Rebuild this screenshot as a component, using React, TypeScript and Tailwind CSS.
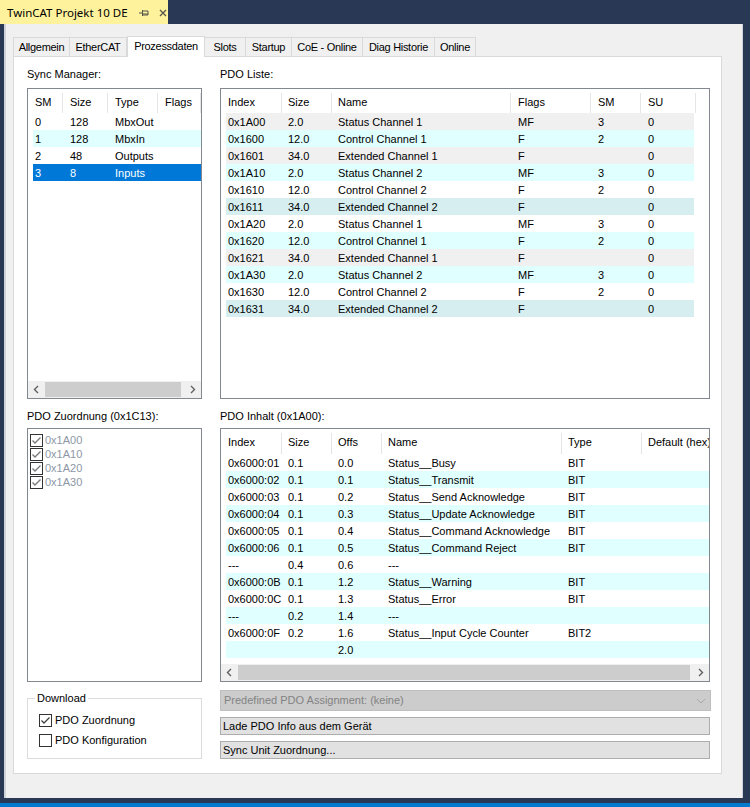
import React from "react";

type Col = { w: number; label: string; pl?: number };

const smCols: Col[] = [
  { w: 35, label: "SM" },
  { w: 45, label: "Size" },
  { w: 50, label: "Type" },
  { w: 43, label: "Flags" },
];

const smRows = [
  { cells: ["0", "128", "MbxOut", ""], bg: "white" },
  { cells: ["1", "128", "MbxIn", ""], bg: "cyan" },
  { cells: ["2", "48", "Outputs", ""], bg: "white" },
  { cells: ["3", "8", "Inputs", ""], bg: "sel" },
];

const listCols: Col[] = [
  { w: 61, label: "Index", pl: 7 },
  { w: 50, label: "Size", pl: 6 },
  { w: 179, label: "Name", pl: 6 },
  { w: 80, label: "Flags", pl: 7 },
  { w: 50, label: "SM", pl: 7 },
  { w: 55, label: "SU", pl: 7 },
];

const listRows = [
  { cells: ["0x1A00", "2.0", "Status Channel 1", "MF", "3", "0"], bg: "gray" },
  { cells: ["0x1600", "12.0", "Control Channel 1", "F", "2", "0"], bg: "cyan" },
  { cells: ["0x1601", "34.0", "Extended Channel 1", "F", "", "0"], bg: "gray" },
  { cells: ["0x1A10", "2.0", "Status Channel 2", "MF", "3", "0"], bg: "cyan" },
  { cells: ["0x1610", "12.0", "Control Channel 2", "F", "2", "0"], bg: "white" },
  { cells: ["0x1611", "34.0", "Extended Channel 2", "F", "", "0"], bg: "teal" },
  { cells: ["0x1A20", "2.0", "Status Channel 1", "MF", "3", "0"], bg: "white" },
  { cells: ["0x1620", "12.0", "Control Channel 1", "F", "2", "0"], bg: "cyan" },
  { cells: ["0x1621", "34.0", "Extended Channel 1", "F", "", "0"], bg: "gray" },
  { cells: ["0x1A30", "2.0", "Status Channel 2", "MF", "3", "0"], bg: "cyan" },
  { cells: ["0x1630", "12.0", "Control Channel 2", "F", "2", "0"], bg: "white" },
  { cells: ["0x1631", "34.0", "Extended Channel 2", "F", "", "0"], bg: "teal" },
];

const inhaltCols: Col[] = [
  { w: 61, label: "Index", pl: 7 },
  { w: 50, label: "Size", pl: 6 },
  { w: 50, label: "Offs", pl: 6 },
  { w: 180, label: "Name", pl: 6 },
  { w: 80, label: "Type", pl: 6 },
  { w: 80, label: "Default (hex)", pl: 6 },
];

const inhaltData = [
  ["0x6000:01", "0.1", "0.0", "Status__Busy", "BIT"],
  ["0x6000:02", "0.1", "0.1", "Status__Transmit", "BIT"],
  ["0x6000:03", "0.1", "0.2", "Status__Send Acknowledge", "BIT"],
  ["0x6000:04", "0.1", "0.3", "Status__Update Acknowledge", "BIT"],
  ["0x6000:05", "0.1", "0.4", "Status__Command Acknowledge", "BIT"],
  ["0x6000:06", "0.1", "0.5", "Status__Command Reject", "BIT"],
  ["---", "0.4", "0.6", "---", ""],
  ["0x6000:0B", "0.1", "1.2", "Status__Warning", "BIT"],
  ["0x6000:0C", "0.1", "1.3", "Status__Error", "BIT"],
  ["---", "0.2", "1.4", "---", ""],
  ["0x6000:0F", "0.2", "1.6", "Status__Input Cycle Counter", "BIT2"],
  ["", "", "2.0", "", ""],
];
const inhaltRows = inhaltData.map((cells, i) => ({ cells: [...cells, ""], bg: i % 2 ? "cyan" : "white" }));

const bgClass: Record<string, string> = {
  white: "bg-white text-black",
  cyan: "bg-[#e0ffff] text-black",
  gray: "bg-[#f0f0f0] text-black",
  teal: "bg-[#d6eef0] text-black",
  sel: "bg-[#0078d7] text-white",
};

const tabs = [
  { label: "Allgemein", w: 57 },
  { label: "EtherCAT", w: 57 },
  { label: "Prozessdaten", w: 78, active: true },
  { label: "Slots", w: 41 },
  { label: "Startup", w: 46 },
  { label: "CoE - Online", w: 71 },
  { label: "Diag Historie", w: 72 },
  { label: "Online", w: 41 },
];

function Arrow({ dir }: { dir: "l" | "r" }) {
  return (
    <svg width="17" height="17" viewBox="0 0 17 17">
      <polyline
        points={dir === "l" ? "10,5 6.5,8.5 10,12" : "7,5 10.5,8.5 7,12"}
        fill="none"
        stroke="#606060"
        strokeWidth="1.4"
      />
    </svg>
  );
}

function HScroll({ thumbW }: { thumbW: number }) {
  return (
    <div className="flex h-[17px] bg-[#f0f0f0] items-center">
      <Arrow dir="l" />
      <div className="flex-1 h-[15px] flex items-center">
        <div className="h-[15px] bg-[#cdcdcd]" style={{ width: thumbW }} />
      </div>
      <Arrow dir="r" />
    </div>
  );
}

function ListView({
  cols,
  rows,
  headerH,
  rowW,
  scroll,
  className,
}: {
  cols: Col[];
  rows: { cells: string[]; bg: string }[];
  headerH: number;
  rowW?: number;
  scroll?: number;
  className: string;
}) {
  return (
    <div className={`border border-[#828790] bg-white flex flex-col overflow-hidden ${className}`}>
      <div className="flex shrink-0" style={{ height: headerH }}>
        {cols.map((c, i) => (
          <div
            key={i}
            className="relative flex items-center pt-[2px] shrink-0 whitespace-nowrap"
            style={{ width: c.w, paddingLeft: c.pl ?? 7 }}
          >
            {c.label}
            <span className="absolute right-0 top-[4px] bottom-0 w-px bg-[#e5e5e5]" />
          </div>
        ))}
      </div>
      {rows.map((r, ri) => (
        <div
          key={ri}
          className={`flex h-[17px] ml-[5px] items-center pt-[1px] shrink-0 ${bgClass[r.bg]}`}
          style={rowW ? { width: rowW } : undefined}
        >
          {r.cells.map((t, ci) => (
            <div
              key={ci}
              className="shrink-0 whitespace-nowrap overflow-hidden"
              style={{
                width: ci === 0 ? cols[ci].w - 5 : cols[ci].w,
                paddingLeft: ci === 0 ? (cols[ci].pl ?? 7) - 5 : cols[ci].pl ?? 7,
              }}
            >
              {t}
            </div>
          ))}
        </div>
      ))}
      {scroll !== undefined && (
        <div className="mt-auto">
          <HScroll thumbW={scroll} />
        </div>
      )}
    </div>
  );
}

function Check({ checked, muted }: { checked: boolean; muted?: boolean }) {
  return (
    <svg width="13" height="13" viewBox="0 0 13 13" className="shrink-0">
      <rect x="0.5" y="0.5" width="12" height="12" fill="white" stroke="#333333" />
      {checked && (
        <polyline
          points="2.5,6.5 5,9 10.5,3.5"
          fill="none"
          stroke={muted ? "#7a7a7a" : "#444444"}
          strokeWidth="1.4"
        />
      )}
    </svg>
  );
}

export default function App() {
  return (
    <div className="w-[750px] h-[807px] bg-[#293955] flex flex-col overflow-hidden font-[family-name:Liberation_Sans,Arial,sans-serif] text-[11px] text-black">
      {/* document tab */}
      <div className="flex h-[24px] shrink-0">
        <div className="w-[168px] bg-[#fff29d] flex items-center pl-[7px] pt-[2px] font-[family-name:Noto_Sans,sans-serif] text-[11.5px]">
          <span>TwinCAT Projekt 10 DE</span>
          <svg width="10" height="8" viewBox="0 0 10 8" className="ml-[11px]">
            <path d="M0 4H3M3.5 1V7M4 2H9V6H4M4 5H9" fill="none" stroke="#55554a" strokeWidth="1" />
          </svg>
          <svg width="8" height="8" viewBox="0 0 8 8" className="ml-[10px]">
            <path d="M1 1L7 7M7 1L1 7" stroke="#55554a" strokeWidth="1.3" />
          </svg>
        </div>
      </div>

      {/* window */}
      <div className="ml-[4px] w-[739px] h-[774px] bg-[#f0f0f0] border-l-[2px] border-r border-[#cfd3d9] shrink-0 pl-[7px] pt-[11px]">
        {/* tab strip */}
        <div className="flex items-end h-[21px]">
          {tabs.map((t) => (
            <div
              key={t.label}
              className={`flex items-center justify-center border border-b-0 border-[#d9d9d9] tracking-[-0.3px] ${
                t.active ? "bg-white h-[21px] relative z-10 mb-[-1px] pb-[1px]" : "bg-[#f0f0f0] h-[19px] border-l-0 first:border-l"
              }`}
              style={{ width: t.w }}
            >
              {t.label}
            </div>
          ))}
        </div>

        {/* tab page */}
        <div className="w-[709px] h-[718px] bg-white border border-[#d9d9d9] flex gap-[18px] pl-[13px] pt-[10px]">
          {/* left column */}
          <div className="w-[175px] flex flex-col">
            <div className="h-[21px] leading-[15px]">Sync Manager:</div>
            <ListView cols={smCols} rows={smRows} headerH={24} scroll={136} className="h-[311px]" />
            <div className="h-[29px] pt-[10px] leading-[15px]">PDO Zuordnung (0x1C13):</div>
            <div className="h-[254px] border border-[#828790] bg-white pt-[4px] pl-[2px] flex flex-col">
              {["0x1A00", "0x1A10", "0x1A20", "0x1A30"].map((x) => (
                <div key={x} className="flex items-center h-[14px] gap-[2px] text-[#8d97a5]">
                  <Check checked muted />
                  <span>{x}</span>
                </div>
              ))}
            </div>
            <fieldset className="mt-[10px] h-[67px] border border-[#dcdcdc] px-[11px] pt-[5px]">
              <legend className="px-[2px] ml-[-4px] leading-[13px]">Download</legend>
              <div className="flex items-center gap-[3px] h-[20px]">
                <Check checked />
                <span>PDO Zuordnung</span>
              </div>
              <div className="flex items-center gap-[3px] h-[20px]">
                <Check checked={false} />
                <span>PDO Konfiguration</span>
              </div>
            </fieldset>
          </div>

          {/* right column */}
          <div className="w-[490px] flex flex-col">
            <div className="h-[21px] leading-[15px]">PDO Liste:</div>
            <ListView cols={listCols} rows={listRows} headerH={24} rowW={468} className="h-[311px]" />
            <div className="h-[29px] pt-[10px] leading-[15px]">PDO Inhalt (0x1A00):</div>
            <ListView cols={inhaltCols} rows={inhaltRows} headerH={25} scroll={452} className="h-[254px]" />
            <div className="mt-[8px] h-[21px] w-[491px] bg-[#cccccc] border border-[#bfbfbf] flex items-center pl-[3px] text-[#838383]">
              <span className="flex-1">Predefined PDO Assignment: (keine)</span>
              <svg width="10" height="6" viewBox="0 0 10 6" className="mr-[4px]">
                <polyline points="1,1 5,5 9,1" fill="none" stroke="#a8a8a8" strokeWidth="1" />
              </svg>
            </div>
            <div className="mt-[6px] h-[18px] bg-[#e1e1e1] border border-[#adadad] flex items-center pl-[2px]">
              Lade PDO Info aus dem Gerät
            </div>
            <div className="mt-[6px] h-[18px] bg-[#e1e1e1] border border-[#adadad] flex items-center pl-[2px]">
              Sync Unit Zuordnung...
            </div>
          </div>
        </div>
      </div>
      <div className="flex-1" />
      <div className="h-[4px] bg-[#007acc] shrink-0" />
    </div>
  );
}
